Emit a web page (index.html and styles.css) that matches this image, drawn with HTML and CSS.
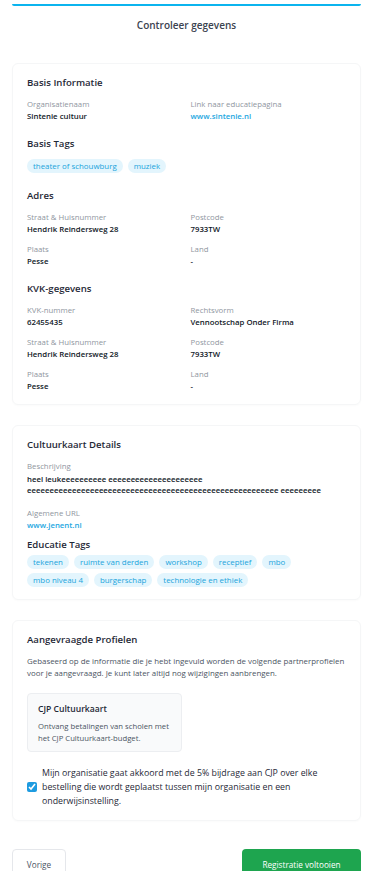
FILE: index.html
```html
<!DOCTYPE html>
<html lang="nl">
<head>
    <meta charset="UTF-8">
    <meta name="viewport" content="width=device-width, initial-scale=1.0">
    <title>Controleer gegevens</title>
    <link rel="stylesheet" href="styles.css">
</head>
<body>
    <div class="progress"></div>
    <h1 class="page-title">Controleer gegevens</h1>

    <div class="card card-first">
        <h2>Basis Informatie</h2>
        <div class="fields">
            <div class="field">
                <span class="label">Organisatienaam</span>
                <span class="value">Sintenie cultuur</span>
            </div>
            <div class="field">
                <span class="label">Link naar educatiepagina</span>
                <a class="value link" href="#">www.sintenie.nl</a>
            </div>
        </div>

        <h2>Basis Tags</h2>
        <div class="tags">
            <span class="tag">theater of schouwburg</span>
            <span class="tag">muziek</span>
        </div>

        <h2>Adres</h2>
        <div class="fields">
            <div class="field">
                <span class="label">Straat &amp; Huisnummer</span>
                <span class="value">Hendrik Reindersweg 28</span>
            </div>
            <div class="field">
                <span class="label">Postcode</span>
                <span class="value">7933TW</span>
            </div>
            <div class="field">
                <span class="label">Plaats</span>
                <span class="value">Pesse</span>
            </div>
            <div class="field">
                <span class="label">Land</span>
                <span class="value">-</span>
            </div>
        </div>

        <h2>KVK-gegevens</h2>
        <div class="fields">
            <div class="field">
                <span class="label">KVK-nummer</span>
                <span class="value">62455435</span>
            </div>
            <div class="field">
                <span class="label">Rechtsvorm</span>
                <span class="value">Vennootschap Onder Firma</span>
            </div>
            <div class="field">
                <span class="label">Straat &amp; Huisnummer</span>
                <span class="value">Hendrik Reindersweg 28</span>
            </div>
            <div class="field">
                <span class="label">Postcode</span>
                <span class="value">7933TW</span>
            </div>
            <div class="field">
                <span class="label">Plaats</span>
                <span class="value">Pesse</span>
            </div>
            <div class="field">
                <span class="label">Land</span>
                <span class="value">-</span>
            </div>
        </div>
    </div>

    <div class="card">
        <h2>Cultuurkaart Details</h2>
        <div class="field single">
            <span class="label">Beschrijving</span>
            <span class="value text">heel leukeeeeeeeeee eeeeeeeeeeeeeeeeeeeee eeeeeeeeeeeeeeeeeeeeeeeeeeeeeeeeeeeeeeeeeeeeeeeeeeeeeeee eeeeeeeee</span>
        </div>
        <div class="field single">
            <span class="label">Algemene URL</span>
            <a class="value link" href="#">www.jenent.nl</a>
        </div>

        <h2 class="tight">Educatie Tags</h2>
        <div class="tags">
            <span class="tag">tekenen</span>
            <span class="tag">ruimte van derden</span>
            <span class="tag">workshop</span>
            <span class="tag">receptief</span>
            <span class="tag">mbo</span>
            <span class="tag">mbo niveau 4</span>
            <span class="tag">burgerschap</span>
            <span class="tag">technologie en ethiek</span>
        </div>
    </div>

    <div class="card">
        <h2>Aangevraagde Profielen</h2>
        <p class="intro">Gebaseerd op de informatie die je hebt ingevuld worden de volgende partnerprofielen voor je aangevraagd. Je kunt later altijd nog wijzigingen aanbrengen.</p>
        <div class="profile">
            <h3>CJP Cultuurkaart</h3>
            <p>Ontvang betalingen van scholen met het CJP Cultuurkaart-budget.</p>
        </div>
        <label class="agree">
            <input type="checkbox" checked>
            <span>Mijn organisatie gaat akkoord met de 5% bijdrage aan CJP over elke bestelling die wordt geplaatst tussen mijn organisatie en een onderwijsinstelling.</span>
        </label>
    </div>

    <div class="actions">
        <button class="btn btn-back">Vorige</button>
        <button class="btn btn-finish">Registratie voltooien</button>
    </div>
</body>
</html>
```

FILE: styles.css
```css
body {
    font-family: "Open Sans", "Noto Sans", Arial, sans-serif;
    margin: 0;
    padding: 4px 12px 0;
    background-color: #ffffff;
    color: #1f2937;
}
.progress {
    height: 2px;
    background-color: #0bb4ee;
    border-radius: 0 0 2px 2px;
}
.page-title {
    margin: 12px 0 0;
    text-align: center;
    font-size: 10px;
    font-weight: 600;
    color: #3b4350;
    line-height: 14px;
}
.card {
    margin-top: 20px;
    padding: 12px 14px 12px;
    border: 1px solid #f5f6f7;
    border-radius: 6px;
    box-shadow: 0 1px 2px rgba(0, 0, 0, 0.02);
}
.card-first {
    margin-top: 31px;
}
.card h2 {
    margin: 0 0 8px;
    font-size: 9.6px;
    font-weight: 600;
    color: #1f2937;
    line-height: 14px;
}
.card h2.tight {
    margin-bottom: 3px;
}
.fields {
    display: grid;
    grid-template-columns: 1fr 1fr;
    column-gap: 8px;
    row-gap: 8px;
    margin-bottom: 15px;
}
.fields:last-child {
    margin-bottom: 0;
}
.field {
    display: flex;
    flex-direction: column;
}
.field.single {
    margin-bottom: 11px;
}
.field.single + .field.single {
    margin-bottom: 7px;
}
.label {
    font-size: 7.8px;
    line-height: 12px;
    color: #8f96a0;
}
.value {
    font-size: 7.8px;
    line-height: 12px;
    font-weight: 600;
    color: #111827;
}
.value.text {
    margin-top: 2px;
    line-height: 11px;
    word-break: break-word;
}
.link {
    color: #1ea7e1;
    text-decoration: none;
}
.tags {
    display: flex;
    flex-wrap: wrap;
    gap: 4px 5px;
    margin-bottom: 16px;
}
.tags:last-child {
    margin-bottom: 0;
}
.tag {
    padding: 0 6px;
    height: 14px;
    line-height: 14px;
    border-radius: 7px;
    background-color: #e3f5fd;
    color: #20a4dc;
    font-size: 7.9px;
}
.intro {
    margin: 0 0 14px;
    font-size: 7.9px;
    line-height: 12px;
    color: #4b5563;
}
.profile {
    box-sizing: border-box;
    width: 155px;
    padding: 9px 4px 7px 10px;
    border: 1px solid #eceef1;
    border-radius: 4px;
    background-color: #f9fafb;
}
.profile h3 {
    margin: 0 0 5px;
    font-size: 8.6px;
    font-weight: 600;
    color: #1f2937;
    line-height: 12px;
}
.profile p {
    margin: 0;
    font-size: 7.7px;
    line-height: 12px;
    color: #4b5563;
}
.agree {
    display: flex;
    align-items: center;
    gap: 5px;
    margin-top: 14px;
    font-size: 8.8px;
    line-height: 14px;
    color: #1f2937;
}
.agree input {
    margin: 0;
    width: 10px;
    height: 10px;
    flex-shrink: 0;
    accent-color: #1e9be0;
}
.actions {
    display: flex;
    justify-content: space-between;
    margin-top: 28px;
}
.btn {
    height: 30px;
    padding: 0 12px;
    border-radius: 4px;
    font-family: inherit;
    font-size: 8.2px;
    cursor: pointer;
}
.btn-back {
    width: 54px;
    background-color: #ffffff;
    border: 1px solid #e5e7eb;
    color: #4b5563;
}
.btn-finish {
    width: 119px;
    background-color: #1ea54f;
    border: none;
    color: #ffffff;
}
```
